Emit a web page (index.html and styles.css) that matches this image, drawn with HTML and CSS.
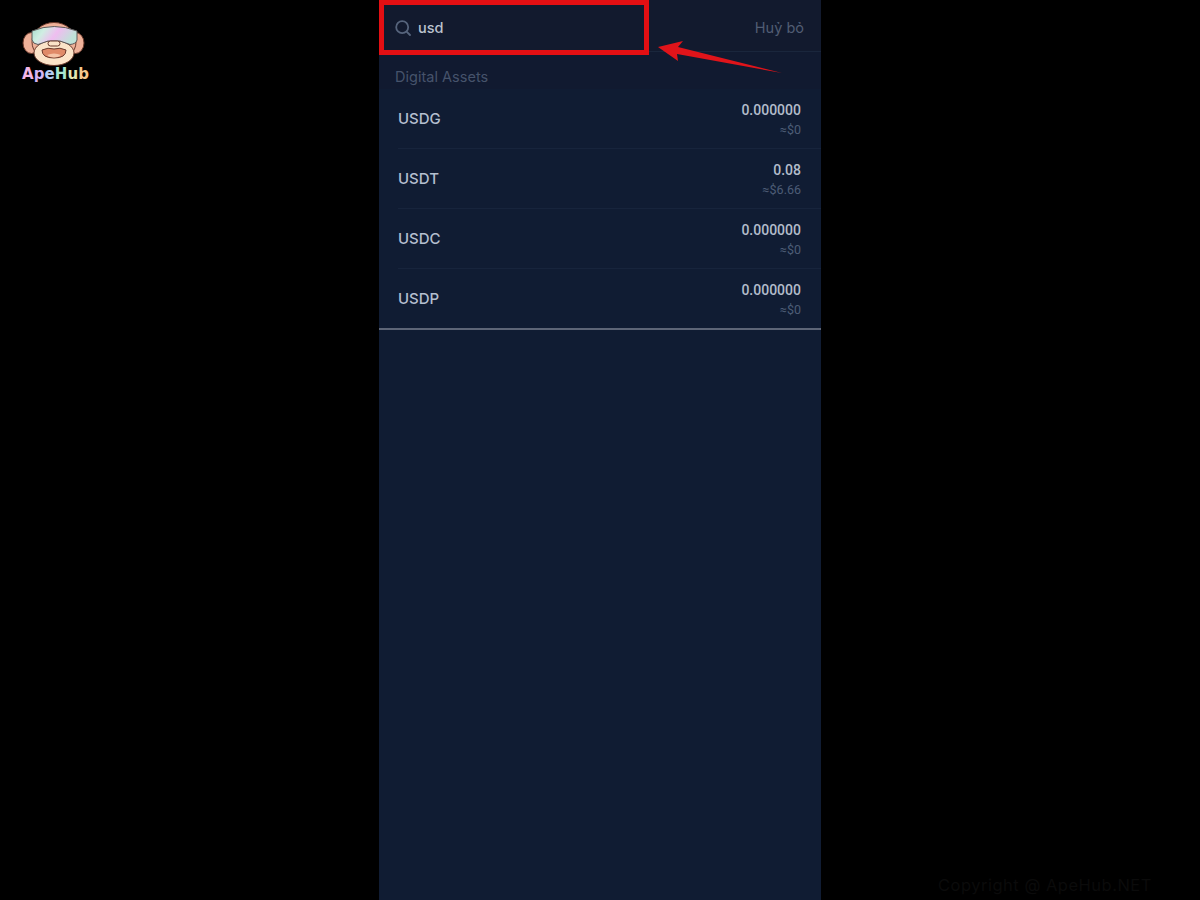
FILE: index.html
```html
<!DOCTYPE html>
<html lang="vi">
<head>
<meta charset="utf-8">
<title>ApeHub</title>
<link rel="stylesheet" href="styles.css">
</head>
<body>
<div class="stage">
  <aside class="side-left">
    <div class="logo">
      <svg class="logo-mark" width="64" height="44" viewBox="0 0 64 44">
        <defs>
          <linearGradient id="visor" x1="0" y1="0" x2="1" y2="0.3">
            <stop offset="0" stop-color="#a6dccb"/>
            <stop offset="0.3" stop-color="#cfeee2"/>
            <stop offset="0.6" stop-color="#efbdf0"/>
            <stop offset="1" stop-color="#bfe2d8"/>
          </linearGradient>
        </defs>
        <ellipse cx="9.5" cy="21" rx="8.5" ry="10.5" fill="#eeb199" stroke="#6b3a2c" stroke-width="1"/>
        <ellipse cx="53.5" cy="21" rx="8.5" ry="10.5" fill="#eeb199" stroke="#6b3a2c" stroke-width="1"/>
        <ellipse cx="32" cy="20" rx="22" ry="19.5" fill="#eeb199" stroke="#6b3a2c" stroke-width="1"/>
        <ellipse cx="32" cy="31" rx="20" ry="12.5" fill="#fbe3c8" stroke="#6b3a2c" stroke-width="1"/>
        <path d="M20 28 Q26 25 32 27 Q38 25 44 28 Q44 36 32 36 Q20 36 20 28Z" fill="#e08a68" stroke="#6b3a2c" stroke-width="1"/>
        <path d="M25 33 Q32 30 39 33 Q36 35.5 32 35.5 Q28 35.5 25 33Z" fill="#f5c3a6"/>
        <path d="M10 9 Q32 0 55 9 L55 18 Q54 22 48 22.5 L38 19 L26 19 L16 22.5 Q11 22 10 18Z" fill="url(#visor)" stroke="#5d5a5a" stroke-width="1"/>
        <rect x="26" y="19" width="12" height="5" rx="2.5" fill="#fbe3c8" stroke="#6b3a2c" stroke-width="1"/>
      </svg>
      <div class="logo-word"><span class="c1">A</span><span class="c2">p</span><span class="c3">e</span><span class="c4">H</span><span class="c5">u</span><span class="c6">b</span></div>
    </div>
  </aside>

  <main class="phone">
    <header class="search-bar">
      <div class="search-field">
        <svg class="search-icon" width="16" height="16" viewBox="0 0 16 16" fill="none">
          <circle cx="7.2" cy="7.2" r="6" stroke="#56647c" stroke-width="1.8"/>
          <path d="M11.6 11.6 L15 15" stroke="#56647c" stroke-width="1.8" stroke-linecap="round"/>
        </svg>
        <span class="search-text">usd</span>
      </div>
      <span class="cancel">Huỷ bỏ</span>
    </header>
    <div class="section-title">Digital Assets</div>
    <ul class="asset-list">
      <li class="asset"><span class="asset-name">USDG</span><div class="asset-values"><span class="amount">0.000000</span><span class="fiat">≈$0</span></div></li>
      <li class="asset"><span class="asset-name">USDT</span><div class="asset-values"><span class="amount">0.08</span><span class="fiat">≈$6.66</span></div></li>
      <li class="asset"><span class="asset-name">USDC</span><div class="asset-values"><span class="amount">0.000000</span><span class="fiat">≈$0</span></div></li>
      <li class="asset"><span class="asset-name">USDP</span><div class="asset-values"><span class="amount">0.000000</span><span class="fiat">≈$0</span></div></li>
    </ul>
    <div class="list-end"></div>

    <div class="highlight"></div>
    <svg class="arrow" width="130" height="40" viewBox="0 0 130 40">
      <path d="M0 7 L25 1 L20 7 L124 33 L19 14 L20 21Z" fill="#e0141a"/>
    </svg>
  </main>

  <aside class="side-right">
    <span class="copyright">Copyright @ ApeHub.NET</span>
  </aside>
</div>
</body>
</html>
```

FILE: styles.css
```css
* { box-sizing: border-box; }
html, body { margin: 0; height: 100%; background: #000; }
body { font-family: Inter, "Liberation Sans", sans-serif; overflow: hidden; }

.stage {
  display: grid;
  grid-template-columns: 379px 442px 379px;
  height: 900px;
}

.side-left { padding: 22px 0 0 22px; }
.logo { display: flex; flex-direction: column; align-items: flex-start; width: 70px; }
.logo-mark { display: block; }
.logo-word {
  margin-top: 0;
  font-family: "DejaVu Sans", sans-serif;
  font-weight: 700;
  font-size: 15px;
  line-height: 16px;
  letter-spacing: 0.1px;
  white-space: nowrap;
}
.c1 { color: #f3b6e6; }
.c2 { color: #d3b3f2; }
.c3 { color: #b5cdf4; }
.c4 { color: #a8e6d0; }
.c5 { color: #e4e6b0; }
.c6 { color: #f5c68c; }

.phone {
  position: relative;
  background: #101c33;
  height: 900px;
}

.search-bar {
  display: flex;
  align-items: center;
  justify-content: space-between;
  height: 52px;
  padding: 4px 17px 0 16px;
  background: #121a2e;
  border-bottom: 1px solid #1a263c;
}
.search-field { display: flex; align-items: center; gap: 7px; }
.search-icon { display: block; }
.search-text { font-size: 14.5px; font-weight: 500; color: #bcc3cf; }
.cancel { font-size: 14.5px; color: #515d73; }

.section-title {
  height: 37px;
  padding: 16px 0 0 16px;
  font-size: 14.5px;
  line-height: 18px;
  letter-spacing: 0.02px;
  color: #46536b;
  background: #111a30;
}

.asset-list { list-style: none; margin: 0; padding: 0 0 0 19px; }
.asset {
  display: flex;
  align-items: center;
  justify-content: space-between;
  height: 60px;
  padding-right: 20px;
  border-bottom: 1px solid #17243c;
}
.asset:last-child { border-bottom: 0; height: 59px; }
.asset-name { font-size: 15px; font-weight: 500; color: #b4bfcf; }
.asset-values { display: flex; flex-direction: column; align-items: flex-end; padding-top: 2px; }
.amount { font-family: Roboto, sans-serif; font-size: 14px; font-weight: 500; line-height: 20px; color: #b3bccb; }
.fiat { font-family: Roboto, sans-serif; font-size: 12.5px; line-height: 20px; color: #4d5c76; }

.list-end { height: 2px; background: #5d6577; }

.highlight {
  position: absolute;
  left: 0;
  top: 0;
  width: 270px;
  height: 55px;
  border: 5px solid #e30f13;
}
.arrow { position: absolute; left: 279px; top: 40px; }

.side-right { display: flex; align-items: flex-end; padding: 0 0 6px 117px; }
.copyright {
  font-family: Inter, sans-serif;
  font-size: 16.5px;
  line-height: 18px;
  letter-spacing: 0.5px;
  color: #0b0b0b;
  white-space: nowrap;
}
```
